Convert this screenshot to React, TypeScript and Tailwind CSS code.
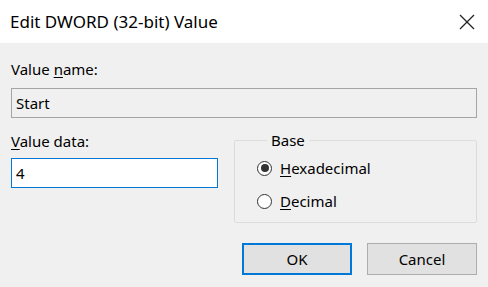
import React from 'react'

const font = { fontFamily: "'Noto Sans', 'Open Sans', sans-serif" }

function Radio({ checked, mnemonic, rest }: { checked?: boolean; mnemonic: string; rest: string }) {
  return (
    <label className="flex items-center gap-[8px] h-[20px]">
      <span className="w-[15px] h-[15px] rounded-full border border-[#333] bg-white flex items-center justify-center">
        {checked && <span className="w-[8px] h-[8px] rounded-full bg-[#333]" />}
      </span>
      <span>
        <span className="underline underline-offset-2">{mnemonic}</span>
        {rest}
      </span>
    </label>
  )
}

export default function App() {
  return (
    <div className="w-[488px] h-[287px] bg-[#f0f0f0] text-black text-[15px] leading-[20px] overflow-hidden" style={font}>
      {/* Title bar */}
      <div className="h-[43px] bg-white flex items-center justify-between pl-[10px] pr-[13px]">
        <span className="text-[17px]">Edit DWORD (32-bit) Value</span>
        <svg width="16" height="16" viewBox="0 0 16 16" fill="none" stroke="#222" strokeWidth="1.3">
          <line x1="1" y1="1" x2="15" y2="15" />
          <line x1="15" y1="1" x2="1" y2="15" />
        </svg>
      </div>

      <div className="px-[11px] pt-[16px]">
        <div>
          Value <span className="underline underline-offset-2">n</span>ame:
        </div>
        <div className="mt-[9px] h-[30px] border border-[#a5a5a5] bg-[#f0f0f0] flex items-center px-[4px]">Start</div>

        <div className="flex gap-[16px] mt-[13px]">
          <div className="w-[207px]">
            <div>
              <span className="underline underline-offset-2">V</span>alue data:
            </div>
            <div className="mt-[7px] h-[30px] border border-[#0078d7] bg-white flex items-center px-[4px]">4</div>
          </div>
          <fieldset className="flex-1 border border-[#dcdcdc] h-[93px] mt-[-1px] pl-[22px] rounded-[2px]">
            <legend className="ml-[10px] px-[4px]">Base</legend>
            <div className="flex flex-col gap-[13px] mt-[8px]">
              <Radio checked mnemonic="H" rest="exadecimal" />
              <Radio mnemonic="D" rest="ecimal" />
            </div>
          </fieldset>
        </div>

        <div className="flex justify-end gap-[15px] mt-[20px]">
          <button className="w-[110px] h-[32px] bg-[#e1e1e1] border-2 border-[#0078d7]">OK</button>
          <button className="w-[110px] h-[32px] bg-[#e1e1e1] border border-[#adadad]">Cancel</button>
        </div>
      </div>
    </div>
  )
}
